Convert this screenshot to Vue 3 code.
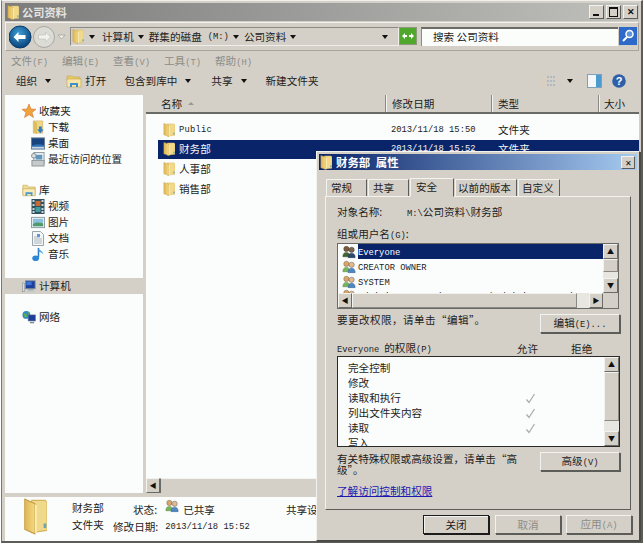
<script setup>
const menus = [['文件', '(F)'], ['编辑', '(E)'], ['查看', '(V)'], ['工具', '(T)'], ['帮助', '(H)']]
const favs = [
  { t: '下载', i: 'i-down' },
  { t: '桌面', i: 'i-desk' },
  { t: '最近访问的位置', i: 'i-recent' }
]
const libs = [
  { t: '视频', i: 'i-video' },
  { t: '图片', i: 'i-pic' },
  { t: '文档', i: 'i-doc' },
  { t: '音乐', i: 'i-music' }
]
const files = [
  { n: 'Public', lat: true, d: '2013/11/18 15:50', k: '文件夹' },
  { n: '财务部', d: '2013/11/18 15:52', k: '文件夹', sel: true },
  { n: '人事部' },
  { n: '销售部' }
]
const perms = [
  { t: '完全控制' },
  { t: '修改' },
  { t: '读取和执行', ok: true },
  { t: '列出文件夹内容', ok: true },
  { t: '读取', ok: true },
  { t: '写入' }
]
</script>

<template>
  <div class="page">
    <svg width="0" height="0" class="defs">
      <defs>
        <linearGradient id="fold" x1="0" x2="1" y1="0" y2="0">
          <stop offset="0" stop-color="#dfb653" />
          <stop offset="1" stop-color="#f3d985" />
        </linearGradient>
        <radialGradient id="back" cx="0.45" cy="0.35" r="0.7">
          <stop offset="0" stop-color="#3f9fd8" />
          <stop offset="1" stop-color="#063a72" />
        </radialGradient>
        <symbol id="i-folder" viewBox="0 0 14 16" preserveAspectRatio="none">
          <path d="M5 1h8l1 1v12l-9 1z" fill="#f1d98c" stroke="#d3b35c" stroke-width=".5" />
          <path d="M1 0.500l6 2v13l-6-2z" fill="url(#fold)" stroke="#c49e42" stroke-width=".5" />
          <path d="M7.500 3v12" stroke="#fbeeb8" />
          <rect x="12" y="11" width="1.6" height="2" fill="#69a7b5" />
        </symbol>
        <symbol id="i-open" viewBox="0 0 16 16">
          <path d="M1 3h5l1 1h7v3H1z" fill="#e8c968" stroke="#c7a64e" stroke-width=".6" />
          <path d="M1 6h14v8H1z" fill="#f6e5a4" stroke="#c7a64e" stroke-width=".6" />
          <path d="M4 14v-4h8v4h-2v-2H6v2z" fill="#3f8fd0" />
        </symbol>
        <symbol id="i-users" viewBox="0 0 16 16">
          <circle cx="5" cy="5" r="3" fill="#d9a66f" stroke="#7a5a30" stroke-width=".5" />
          <path d="M1 14c0-4 2-5 4-5s4 1 4 5z" fill="#79b45a" stroke="#4b7a38" stroke-width=".5" />
          <circle cx="11" cy="6" r="3" fill="#e6b989" stroke="#3a4f70" stroke-width=".5" />
          <path d="M7 15c0-4 2-5 4-5s4 1 4 5z" fill="#4f86c4" stroke="#2d5684" stroke-width=".5" />
        </symbol>
        <symbol id="i-down" viewBox="0 0 14 16">
          <path d="M2 1h10v13H2z" fill="#efd789" stroke="#c7a64e" stroke-width=".6" />
          <path d="M2 1l4 2v12l-4-2z" fill="#e0bd5c" />
          <path d="M8 7h3v3h2l-3.500 4L6 10h2z" fill="#2b7fc8" />
        </symbol>
        <symbol id="i-desk" viewBox="0 0 15 13">
          <rect x=".5" y=".5" width="14" height="12" fill="#17447f" stroke="#6a7f96" />
          <path d="M1 9c4-2 8-2 13-1v4H1z" fill="#2d6fb4" />
          <rect x="1" y="10" width="13" height="2" fill="#c9d3dc" />
        </symbol>
        <symbol id="i-recent" viewBox="0 0 15 16">
          <rect x="3" y="0.500" width="11" height="12" fill="#e7ecef" stroke="#8d979f" />
          <rect x="1" y="9" width="13" height="6" fill="#c6cac9" stroke="#8d979f" />
          <rect x="5" y="3" width="7" height="5" fill="#5f97bf" />
          <circle cx="3" cy="4" r="2.500" fill="#d8dcdc" stroke="#7f8b90" />
        </symbol>
        <symbol id="i-lib" viewBox="0 0 16 14">
          <path d="M1 1h5l1 2h8v9H1z" fill="#f0dc94" stroke="#c7a64e" stroke-width=".7" />
          <path d="M1 5h14v8H1z" fill="#f7ebb8" stroke="#c7a64e" stroke-width=".7" />
          <path d="M4 13V9h8v4h-2v-2H6v2z" fill="#4d96c9" />
        </symbol>
        <symbol id="i-video" viewBox="0 0 13 15">
          <rect width="13" height="15" fill="#33505c" />
          <path d="M1 1h2v2H1zM1 5h2v2H1zM1 9h2v2H1zM1 12h2v2H1zM10 1h2v2h-2zM10 5h2v2h-2zM10 9h2v2h-2zM10 12h2v2h-2z" fill="#c8d6dc" />
          <path d="M4 2h5v5H4z" fill="#c96a30" />
          <path d="M4 8h5v5H4z" fill="#3f9fa0" />
        </symbol>
        <symbol id="i-pic" viewBox="0 0 15 12">
          <rect x=".5" y=".5" width="14" height="11" fill="#f0f3f4" stroke="#8b989e" />
          <rect x="2" y="2" width="11" height="8" fill="#8dc0de" />
          <path d="M2 8c3-3 7-2 11-1v3H2z" fill="#4f9a6a" />
        </symbol>
        <symbol id="i-doc" viewBox="0 0 12 15">
          <path d="M.5.500h8l3 3v11H.5z" fill="#f3f5f6" stroke="#9aa4ab" />
          <path d="M2 6h6M2 8h8M2 10h8M2 12h8" stroke="#a9b6c0" />
          <rect x="5" y="3" width="3" height="3" fill="#5f97d0" />
        </symbol>
        <symbol id="i-music" viewBox="0 0 13 16">
          <path d="M7 1v10" stroke="#2678c8" stroke-width="1.600" fill="none" />
          <path d="M7 1c1 3 5 3 5 7-1-2-3-3-5-3z" fill="#4a9fe0" />
          <ellipse cx="4" cy="12" rx="3.600" ry="3" fill="#2f86d6" />
        </symbol>
        <symbol id="i-pc" viewBox="0 0 16 14">
          <rect x="4" y="0.500" width="11" height="9" fill="#1b3f9c" stroke="#7d8a94" />
          <rect x="5" y="1.500" width="6" height="4" fill="#3f74d8" />
          <rect x="7" y="10" width="6" height="1.500" fill="#9aa4a8" />
          <rect x="5" y="12" width="10" height="1.500" fill="#c4cacc" />
          <rect x="0.500" y="3" width="2.500" height="10" fill="#d8dcdc" stroke="#7d8a94" stroke-width=".6" />
        </symbol>
        <symbol id="i-net" viewBox="0 0 16 16">
          <circle cx="5" cy="5" r="4.500" fill="#2f88c8" />
          <path d="M2 3l3 1 1 3-3 1zM6 1l3 2-2 1z" fill="#5fb04f" />
          <rect x="7" y="5" width="8.500" height="7" fill="#1b3f9c" stroke="#7d8a94" stroke-width=".6" />
          <rect x="9" y="13" width="5" height="1.600" fill="#7d8a94" />
        </symbol>
      </defs>
    </svg>

    <div class="win">
      <div class="title">
        <svg class="fold"><use href="#i-folder" /></svg>
        <span class="titletxt">公司资料</span>
        <div class="caps">
          <span class="cap"><i class="minbar"></i></span>
          <span class="cap"><i class="maxbox"></i></span>
          <span class="cap x">✕</span>
        </div>
      </div>

      <div class="addrrow">
        <svg class="nav" width="58" height="24" viewBox="0 0 58 24">
          <circle cx="11" cy="12" r="11" fill="url(#back)" stroke="#0b3b68" />
          <path d="M4.500 12l5-5v3h7v4h-7v3z" fill="#fff" />
          <circle cx="35" cy="12" r="10.500" fill="#dcdcd6" stroke="#a8a8a2" />
          <path d="M41.500 12l-5-5v3h-7v4h7v3z" fill="#f2f2ee" stroke="#b4b4ae" stroke-width=".5" />
          <path d="M49 10h7l-3.500 4z" fill="#f0f0ec" stroke="#9a9a94" stroke-width=".7" />
        </svg>
        <div class="addr">
          <svg class="fold"><use href="#i-folder" /></svg>
          <i class="arr a1"></i><span class="crumb">计算机</span>
          <i class="arr a2"></i><span class="crumb">群集的磁盘</span><span class="lat crumbm">(M:)</span>
          <i class="arr a2"></i><span class="crumb">公司资料</span>
          <i class="arr a2"></i>
          <i class="arr aend"></i>
        </div>
        <svg class="go" width="18" height="18" viewBox="0 0 18 18">
          <rect x=".5" y=".5" width="17" height="17" fill="#4fa82c" stroke="#8a9a7a" />
          <path d="M3 9l3-3v2h2v2H6v2zM15 9l-3 3v-2h-2V8h2V6z" fill="#fff" />
        </svg>
        <div class="search">搜索 公司资料</div>
        <svg class="sbtn" width="18" height="18" viewBox="0 0 18 18">
          <rect width="18" height="18" fill="#2c69c9" />
          <circle cx="10.500" cy="7" r="3.500" fill="#5d95dc" stroke="#fff" stroke-width="1.500" />
          <path d="M8 10l-4 4" stroke="#fff" stroke-width="2" />
        </svg>
      </div>

      <div class="menubar">
        <span v-for="m in menus" :key="m[0]" class="menu">{{ m[0] }}<span class="lat">{{ m[1] }}</span></span>
      </div>

      <div class="toolbar">
        <span class="tool t0">组织</span><i class="arr ta"></i>
        <svg class="ic16 topen"><use href="#i-open" /></svg>
        <span class="tool">打开</span>
        <span class="tool t1">包含到库中</span><i class="arr ta"></i>
        <span class="tool t2">共享</span><i class="arr ta"></i>
        <span class="tool t3">新建文件夹</span>
        <div class="tright">
          <svg width="14" height="13" viewBox="0 0 14 13">
            <path d="M0 1h4v3H0zM0 5h4v3H0zM0 9h4v3H0z" fill="#dcd0bc" />
            <path d="M5 2h9M5 6h9M5 10h9" stroke="#8fa3b5" stroke-dasharray="2 1" />
          </svg>
          <i class="arr tv"></i>
          <svg class="tpane" width="15" height="14" viewBox="0 0 15 14">
            <rect x=".5" y=".5" width="14" height="13" fill="#f4f6f7" stroke="#7da0bc" />
            <rect x="9" y="1" width="5" height="12" fill="#4b9ad0" />
          </svg>
          <svg class="thelp" width="14" height="14" viewBox="0 0 14 14">
            <circle cx="7" cy="7" r="6.800" fill="#2f5fa8" />
            <text x="7" y="11" text-anchor="middle" class="q">?</text>
          </svg>
        </div>
      </div>

      <div class="panes">
        <div class="navpane">
          <div class="nrow head r1"><svg class="ic14"><path d="M7 0l2 5 5 .300-4 3.200 1.500 5L7 10.700 2.500 13.500 4 8.500 0 5.300 5 5z" fill="#f2a23a" stroke="#c9662a" stroke-width=".5" /></svg><span>收藏夹</span></div>
          <div v-for="f in favs" :key="f.t" class="nrow sub"><svg class="ic14"><use :href="'#' + f.i" /></svg><span>{{ f.t }}</span></div>
          <div class="nrow head gap"><svg class="ic14"><use href="#i-lib" /></svg><span>库</span></div>
          <div v-for="f in libs" :key="f.t" class="nrow sub"><svg class="ic14"><use :href="'#' + f.i" /></svg><span>{{ f.t }}</span></div>
          <div class="nrow head gap3 sel"><svg class="ic14"><use href="#i-pc" /></svg><span>计算机</span></div>
          <div class="nrow head gap"><svg class="ic14"><use href="#i-net" /></svg><span>网络</span></div>
        </div>

        <div class="filepane">
          <div class="cols">
            <div class="col c1">名称<i class="sort"></i></div>
            <div class="col c2">修改日期</div>
            <div class="col c3">类型</div>
            <div class="col c4">大小</div>
          </div>
          <div class="files">
            <div v-for="f in files" :key="f.n" class="frow" :class="{ on: f.sel }">
              <div class="fname">
                <svg class="fold fileic"><use href="#i-folder" /></svg>
                <span :class="{ lat: f.lat, pub: f.lat }">{{ f.n }}</span>
              </div>
              <span class="fdate lat">{{ f.d }}</span>
              <span class="fkind">{{ f.k }}</span>
            </div>
          </div>
          <div class="hscroll"><span class="sb-btn">◀</span><span class="thumb"></span></div>
        </div>
      </div>

      <div class="status">
        <svg class="bigfolder"><use href="#i-folder" /></svg>
        <div class="st1"><div>财务部</div><div>文件夹</div></div>
        <div class="st2">
          <div class="strow"><span class="stk">状态:</span><svg class="ic14 stic"><use href="#i-users" /></svg><span class="shared">已共享</span><span class="shareset">共享设置</span></div>
          <div class="strow"><span>修改日期:</span><span class="lat stdate">2013/11/18 15:52</span></div>
        </div>
      </div>
    </div>

    <div class="dlg">
      <div class="dtitle">
        <svg class="fold"><use href="#i-folder" /></svg>
        <span class="dname">财务部 属性</span>
        <span class="dclose">✕</span>
      </div>
      <div class="tabs">
        <span class="tab w1">常规</span>
        <span class="tab w2">共享</span>
        <span class="tab cur">安全</span>
        <span class="tab w4">以前的版本</span>
        <span class="tab w5">自定义</span>
      </div>
      <div class="panel">
        <div class="objrow"><span class="objk">对象名称:</span><span class="lat">M:\</span>公司资料<span class="lat">\</span>财务部</div>
        <div class="lbl">组或用户名<span class="lat">(G)</span>:</div>
        <div class="ulist">
          <div class="urows">
            <div class="uitems">
              <div class="urow usel"><svg class="ic14"><use href="#i-users" /></svg><span class="lat">Everyone</span></div>
              <div class="urow"><svg class="ic14"><use href="#i-users" /></svg><span class="lat">CREATOR OWNER</span></div>
              <div class="urow"><svg class="ic14"><use href="#i-users" /></svg><span class="lat">SYSTEM</span></div>
              <div class="urow"><svg class="ic14"><use href="#i-users" /></svg><span class="lat">Administrators (BOOKSTORE\Administrators)</span></div>
            </div>
            <div class="vbar">
              <span class="sb-btn">▲</span>
              <span class="vthumb short"></span>
              <span class="vtrack"></span>
              <span class="sb-btn">▼</span>
            </div>
          </div>
          <div class="hbar">
            <span class="sb-btn">◀</span>
            <span class="hthumb"></span>
            <span class="htrack"></span>
            <span class="sb-btn">▶</span>
            <span class="corner"></span>
          </div>
        </div>
        <div class="editrow">
          <span class="edittxt">要更改权限，请单击“编辑”。</span>
          <button class="btn wide">编辑<span class="lat">(E)...</span></button>
        </div>
        <div class="permhead">
          <span><span class="lat">Everyone</span><span class="de">的权限</span><span class="lat">(P)</span></span>
          <span class="allow">允许</span>
          <span class="deny">拒绝</span>
        </div>
        <div class="plist">
          <div class="pitems">
            <div v-for="p in perms" :key="p.t" class="prow">
              <span>{{ p.t }}</span>
              <svg v-if="p.ok" class="chk" width="11" height="11" viewBox="0 0 11 11"><path d="M1.500 6.500l2.500 3L9.500 1" fill="none" stroke="#a8a8a8" stroke-width="1.200" /></svg>
            </div>
          </div>
          <div class="vbar">
            <span class="sb-btn">▲</span>
            <span class="vthumb long"></span>
            <span class="vtrack"></span>
            <span class="sb-btn">▼</span>
          </div>
        </div>
        <div class="advrow">
          <span class="advtxt">有关特殊权限或高级设置，请单击“高级”。</span>
          <button class="btn wide">高级<span class="lat">(V)</span></button>
        </div>
        <a class="link">了解访问控制和权限</a>
      </div>
      <div class="dfoot">
        <button class="btn foot def">关闭</button>
        <button class="btn foot dis">取消</button>
        <button class="btn foot dis">应用<span class="lat">(A)</span></button>
      </div>
    </div>
  </div>
</template>

<style scoped>
.page {
  position: relative;
  width: 644px;
  height: 546px;
  overflow: hidden;
  background: #fff;
  font-family: "Noto Sans CJK SC", "Liberation Sans", sans-serif;
  font-size: 10.6px;
  line-height: 14px;
  color: #1c1c1c;
}
.defs { position: absolute; }
.lat {
  font-family: "Liberation Mono", "Noto Sans CJK SC", monospace;
  font-size: 8.8px;
}
.ic14 { width: 14px; height: 15px; flex: none; }
.ic16 { width: 16px; height: 16px; flex: none; }
.fold { width: 12px; height: 15px; flex: none; }

.win {
  box-sizing: border-box;
  width: 642px;
  height: 543px;
  margin: 0 0 0 1px;
  display: flex;
  flex-direction: column;
  background: #d4d0c8;
  border-left: 1px solid #4c7fbf;
  border-right: 2px solid #5c5c58;
  border-bottom: 2px solid #5c5c58;
  border-top: 1px solid #f0f0ec;
  padding: 2px 2px 0 3px;
}
.title {
  height: 18px;
  flex: none;
  display: flex;
  align-items: center;
  padding-left: 2px;
  background: linear-gradient(90deg, #7c7c7c, #c0c0bc);
  color: #e4e4e0;
  font-size: 11.2px;
  font-weight: 700;
}
.titletxt { margin-left: 3px; }
.caps { margin-left: auto; display: flex; gap: 2px; margin-right: 1px; }
.cap {
  width: 15px;
  height: 14px;
  position: relative;
  box-sizing: border-box;
  background: #d4d0c8;
  border: 1px solid;
  border-color: #f2f2ee #5c5c58 #5c5c58 #f2f2ee;
  color: #111;
  font-size: 9px;
  line-height: 12px;
  text-align: center;
  font-weight: 700;
}
.minbar { position: absolute; left: 3px; bottom: 2px; width: 6px; height: 2px; background: #111; }
.maxbox { position: absolute; left: 2px; top: 1px; width: 7px; height: 7px; border: 1px solid #111; border-top-width: 2px; }

.addrrow {
  height: 29px;
  flex: none;
  margin-top: 1px;
  display: flex;
  align-items: flex-start;
  padding-left: 3px;
  box-sizing: border-box;
  border: 1px solid;
  border-color: #f2f2ee #a8a49c #a8a49c #f2f2ee;
  background: #d4d0c8;
}
.nav { flex: none; margin-top: 2px; }
.addr {
  flex: none;
  width: 329px;
  height: 19px;
  margin: 4px 0 0 3px;
  display: flex;
  align-items: center;
  box-sizing: border-box;
  border: 1px solid #eeeeea;
  border-top-color: #8a8a84;
  border-left-color: #8a8a84;
  padding-left: 1px;
}
.arr {
  display: block;
  flex: none;
  width: 0;
  height: 0;
  border-left: 3px solid transparent;
  border-right: 3px solid transparent;
  border-top: 4px solid #111;
}
.a1 { margin: 0 7px 0 5px; }
.a2 { margin: 0 5px 0 4px; }
.aend { margin-left: auto; margin-right: 10px; }
.crumbm { margin-left: 6px; }
.go { flex: none; margin-top: 4px; }
.search {
  flex: none;
  width: 197px;
  height: 19px;
  margin: 4px 0 0 4px;
  box-sizing: border-box;
  background: #fbfdfb;
  border-top: 2px solid #6a6a66;
  border-left: 1px solid #8a8a84;
  padding: 0 0 0 11px;
  line-height: 15px;
}
.sbtn { flex: none; margin: 4px 0 0 1px; }

.menubar {
  height: 17px;
  flex: none;
  margin-top: 2px;
  display: flex;
  padding-left: 6px;
  gap: 15px;
  color: #8c8c86;
  line-height: 15px;
}
.menu { width: 36px; white-space: nowrap; }

.toolbar {
  height: 25px;
  flex: none;
  display: flex;
  align-items: center;
  box-sizing: border-box;
  padding: 0 0 3px 11px;
}
.ta { margin-left: 8px; }
.topen { margin: 0 3px 0 15px; }
.t1 { margin-left: 18px; }
.t2 { margin-left: 20px; }
.t3 { margin-left: 19px; }
.tright { margin-left: auto; display: flex; align-items: center; margin-right: 13px; }
.tv { margin: 0 14px 0 11px; }
.tpane { margin-right: 10px; }
.q { font: 700 11px "Liberation Sans", sans-serif; fill: #fff; }

.panes {
  flex: 1;
  min-height: 0;
  display: flex;
  gap: 3px;
}
.navpane {
  width: 138px;
  flex: none;
  background: #fafdfb;
  padding-top: 8px;
  box-sizing: border-box;
}
.nrow { height: 16px; display: flex; align-items: center; }
.nrow span { margin-left: 3px; white-space: nowrap; }
.head { padding-left: 17px; }
.sub { padding-left: 26px; }
.gap { margin-top: 15px; }
.gap3 { margin-top: 16px; }
.sel { background: #d4d0c8; }

.filepane {
  flex: 1;
  min-width: 0;
  display: flex;
  flex-direction: column;
  background: #fafdfb;
}
.cols {
  height: 19px;
  flex: none;
  display: flex;
  background: #d4d0c8;
  border-bottom: 2px solid #6a6a66;
  box-sizing: border-box;
}
.col {
  box-sizing: border-box;
  padding-left: 6px;
  border-right: 1px solid #8a8a84;
  box-shadow: 1px 0 0 #f2f2ee;
  line-height: 17px;
  display: flex;
  align-items: center;
}
.c1 { width: 240px; padding-left: 15px; }
.c2 { width: 106px; }
.c3 { width: 107px; }
.c4 { flex: 1; border-right: 0; box-shadow: none; padding-left: 5px; }
.sort {
  margin-left: 6px;
  width: 0;
  height: 0;
  border-left: 3px solid transparent;
  border-right: 3px solid transparent;
  border-bottom: 3px solid #9a9a94;
}
.files { flex: 1; padding: 6px 0 0 12px; }
.frow {
  height: 19.600px;
  display: flex;
  align-items: center;
}
.fname { width: 233px; display: flex; align-items: center; gap: 4px; flex: none; padding-left: 5px; box-sizing: border-box; }
.fileic { height: 14px; }
.fdate { width: 107px; flex: none; }
.fkind { flex: none; }
.pub { letter-spacing: .2px; }
.on { background: #0a246a; color: #f4f4f4; }

.hscroll {
  height: 15px;
  flex: none;
  display: flex;
  background: #d4d0c8;
}
.sb-btn {
  box-sizing: border-box;
  flex: none;
  width: 14px;
  height: 15px;
  background: #d4d0c8;
  border: 1px solid;
  border-color: #f2f2ee #6a6a66 #6a6a66 #f2f2ee;
  font-size: 7px;
  line-height: 13px;
  text-align: center;
  color: #111;
}
.thumb { flex: 1; border-left: 1px solid #6a6a66; border-top: 1px solid #f2f2ee; }

.status {
  height: 44px;
  flex: none;
  margin-top: 4px;
  background: #fafdfb;
  display: flex;
}
.bigfolder { width: 24px; height: 37px; margin: 1px 0 0 18px; flex: none; }
.st1 { margin: 4px 0 0 25px; width: 40px; }
.st1 div { height: 17px; }
.st2 { margin: 4px 0 0 1px; }
.st2 .strow { height: 17px; display: flex; align-items: center; white-space: nowrap; }
.stk { margin-left: 20px; }
.stic { margin: 0 0 8px 8px; }
.shared { margin-left: 4px; }
.shareset { margin-left: 71px; }
.stdate { margin-left: 7px; }

.dlg {
  position: absolute;
  left: 316px;
  top: 151px;
  width: 324px;
  height: 390px;
  box-sizing: border-box;
  background: #d4d0c8;
  border: 1px solid;
  border-color: #f2f2ee #4a4a48 #4a4a48 #f2f2ee;
  box-shadow: 1px 1px 0 #4a4a48;
  padding: 2px 2px 0;
  display: flex;
  flex-direction: column;
}
.dtitle {
  height: 16px;
  flex: none;
  display: flex;
  align-items: center;
  background: linear-gradient(90deg, #0a246a, #a6caf0);
  color: #fff;
  font-size: 11.400px;
  font-weight: 700;
  gap: 4px;
  padding-left: 1px;
  position: relative;
}
.dname { word-spacing: 3px; }
.dclose {
  position: absolute;
  right: 2px;
  top: 2px;
  width: 14px;
  height: 13px;
  box-sizing: border-box;
  background: #d4d0c8;
  border: 1px solid;
  border-color: #f2f2ee #5c5c58 #5c5c58 #f2f2ee;
  color: #111;
  font-size: 8px;
  font-weight: 400;
  line-height: 11px;
  text-align: center;
}
.tabs {
  height: 19px;
  flex: none;
  margin-top: 7px;
  padding-left: 7px;
  display: flex;
  align-items: flex-end;
  gap: 1px;
}
.tab {
  box-sizing: border-box;
  height: 17px;
  padding-left: 4px;
  background: #d4d0c8;
  border-top: 1px solid #f2f2ee;
  border-left: 1px solid #f2f2ee;
  border-right: 1px solid #5c5c58;
  line-height: 16px;
  white-space: nowrap;
}
.w1 { width: 41px; }
.w2 { width: 41px; }
.cur { width: 44px; height: 19px; padding-left: 5px; border-bottom: 1px solid #d4d0c8; margin-bottom: -1px; position: relative; z-index: 1; }
.w4 { width: 62px; padding-left: 2px; }
.w5 { width: 42px; padding-left: 3px; }
.panel {
  flex: none;
  height: 314px;
  margin: 0 6px 0 6px;
  box-sizing: border-box;
  border: 1px solid;
  border-color: #f2f2ee #5c5c58 #5c5c58 #f2f2ee;
  padding: 8px 11px 0 11px;
  display: flex;
  flex-direction: column;
}
.objrow { height: 16px; white-space: nowrap; }
.objk { display: inline-block; width: 70px; }
.lbl { margin-top: 6px; height: 16px; }
.ulist {
  width: 282px;
  height: 66px;
  box-sizing: border-box;
  border: 1px solid #6a6a66;
  background: #fafdfb;
  display: flex;
  flex-direction: column;
}
.urows { flex: 1; min-height: 0; display: flex; }
.uitems { flex: 1; min-width: 0; overflow: hidden; padding-left: 4px; }
.urow { height: 14.800px; display: flex; align-items: flex-start; gap: 2px; white-space: nowrap; }
.urow .lat { height: 15px; line-height: 18px; }
.usel span { background: #0a246a; color: #fff; flex: 1; }
.usel svg { filter: brightness(.55); }
.vbar {
  width: 15px;
  flex: none;
  display: flex;
  flex-direction: column;
  background: #ece9e4;
}
.vthumb { flex: none; background: #d4d0c8; border: 1px solid; border-color: #f2f2ee #8a8a84 #8a8a84 #f2f2ee; box-sizing: border-box; }
.short { height: 13px; }
.long { height: 49px; }
.vtrack { flex: 1; background: #e8e6e0; }
.vbar .sb-btn { width: 15px; }
.hbar { height: 15px; flex: none; display: flex; background: #d4d0c8; }
.hthumb { width: 225px; box-sizing: border-box; border: 1px solid; border-color: #f2f2ee #8a8a84 #8a8a84 #f2f2ee; }
.htrack { flex: 1; background: #e8e6e0; }
.corner { width: 15px; background: #d4d0c8; }
.editrow { margin-top: 4px; display: flex; align-items: flex-start; justify-content: space-between; width: 283px; height: 20px; }
.edittxt { letter-spacing: .4px; }
.btn {
  box-sizing: border-box;
  padding: 0;
  background: #d4d0c8;
  border: 1px solid;
  border-color: #f2f2ee #5c5c58 #5c5c58 #f2f2ee;
  font: inherit;
  color: #1c1c1c;
  box-shadow: 1px 1px 0 #5c5c58;
}
.wide { width: 80px; height: 19px; }
.editrow .wide { margin-top: 1px; }
.permhead {
  margin-top: 7px;
  height: 16px;
  box-sizing: border-box;
  padding-top: 2px;
  display: flex;
  align-items: center;
}
.de { margin-left: 5px; }
.allow { margin-left: 85px; }
.deny { margin-left: 33px; }
.plist {
  width: 283px;
  height: 91px;
  box-sizing: border-box;
  border: 1px solid #2a2a28;
  background: #fafdfb;
  display: flex;
  overflow: hidden;
}
.pitems { flex: 1; min-width: 0; padding: 4px 0 0 10px; overflow: hidden; }
.prow { height: 15px; position: relative; white-space: nowrap; }
.chk { position: absolute; left: 177px; top: 2px; }
.advrow { margin-top: 5px; width: 283px; display: flex; justify-content: space-between; }
.advtxt { width: 190px; line-height: 11px; padding-top: 1px; }
.link { margin-top: 9px; color: #1a1ab0; text-decoration: underline; width: fit-content; }
.dfoot {
  display: flex;
  justify-content: flex-end;
  gap: 5px;
  margin: 5px 5px 0 0;
}
.foot { width: 66px; height: 19px; }
.def { border: 1px solid #1c1c1c; box-shadow: inset 1px 1px 0 #f2f2ee, 1px 1px 0 #1c1c1c; margin-right: 1px; }
.dis { color: #8c8c86; }
</style>
